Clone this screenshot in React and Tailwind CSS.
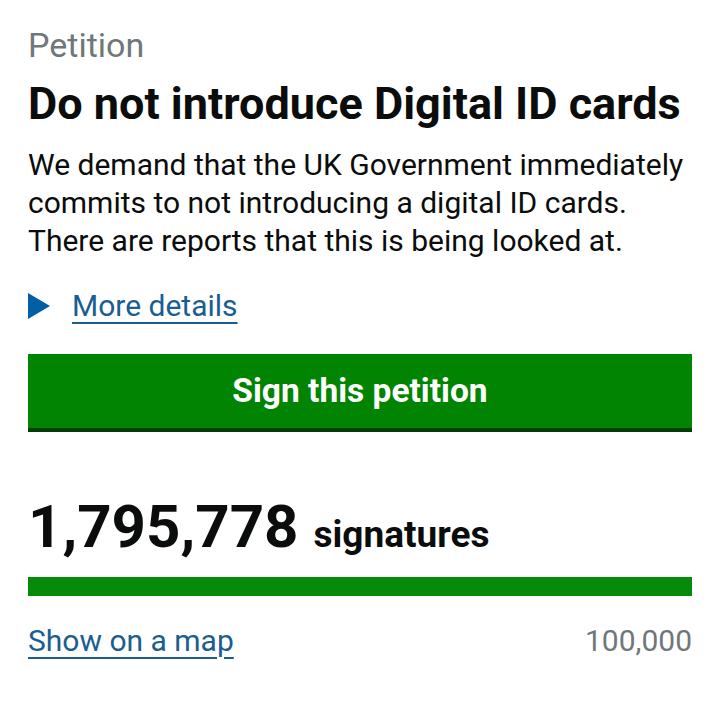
export default function App() {
  return (
    <div className="min-h-screen bg-white px-[28px] pt-[26px] font-['Roboto',sans-serif] text-[#0b0c0c]">
      <p className="text-[34px] leading-[38px] text-[#6f777b]">Petition</p>
      <h1 className="mt-[15px] text-[45px] font-bold leading-[50px]">
        Do not introduce Digital ID cards
      </h1>
      <p className="mt-[17px] text-[30px] leading-[38px]">
        We demand that the UK Government immediately commits to not introducing a digital ID cards.
        There are reports that this is being looked at.
      </p>

      <div className="mt-[28px] flex items-center gap-[22px]">
        <svg width="22" height="26" viewBox="0 0 22 26" className="shrink-0">
          <path d="M0 0 L22 13 L0 26 Z" fill="#005ea5" />
        </svg>
        <a href="#" className="text-[30px] leading-[36px] text-[#1a5d91] underline decoration-[2px] underline-offset-[6px]">
          More details
        </a>
      </div>

      <button className="mt-[30px] flex h-[78px] w-full items-center justify-center border-b-[4px] border-[#003d00] bg-[#018401] text-[33.5px] font-bold text-white">
        Sign this petition
      </button>

      <div className="mt-[65px] flex items-baseline gap-[15px]">
        <span className="text-[60px] font-bold leading-[60px]">1,795,778</span>
        <span className="text-[37px] font-bold">signatures</span>
      </div>

      <div className="mt-[14px] h-[19px] w-full bg-[#078a07]" />

      <div className="mt-[27px] flex items-center justify-between">
        <a href="#" className="text-[30px] leading-[36px] text-[#1a5d91] underline decoration-[2px] underline-offset-[6px]">
          Show on a map
        </a>
        <span className="text-[30px] leading-[36px] text-[#6f777b]">100,000</span>
      </div>
    </div>
  )
}
